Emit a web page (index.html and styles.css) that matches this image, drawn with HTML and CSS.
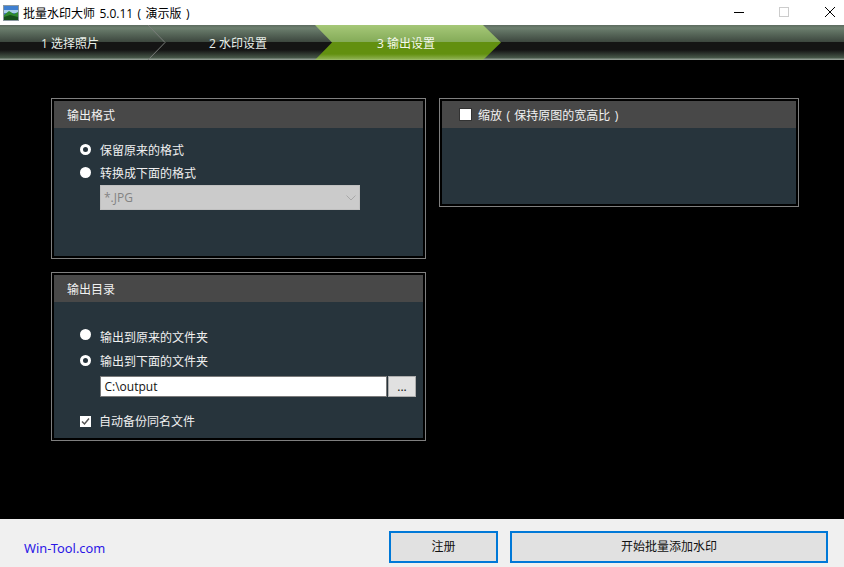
FILE: index.html
```html
<!DOCTYPE html>
<html lang="zh-CN">
<head>
<meta charset="utf-8">
<title>批量水印大师</title>
<link rel="stylesheet" href="styles.css">
</head>
<body>
<div class="app">
  <header class="titlebar">
    <svg class="app-icon" width="16" height="16" viewBox="0 0 16 16">
      <rect x="0.5" y="0.5" width="15" height="15" fill="#4a78c8" stroke="#8a98a0"/>
      <rect x="1" y="1" width="14" height="5" fill="#3f7fd0"/>
      <rect x="1" y="5" width="14" height="3" fill="#a9cfe8"/>
      <path d="M1 10 L6 6 L11 9 L15 7 V15 H1 Z" fill="#2f8a2e"/>
      <path d="M1 12 L7 10 L15 12 V15 H1 Z" fill="#16501c"/>
    </svg>
    <span class="app-title">批量水印大师 5.0.11 ( 演示版 )</span>
    <div class="win-controls">
      <svg class="win-min" width="10" height="10" viewBox="0 0 10 10"><path d="M0 5.5H10" stroke="#000"/></svg>
      <svg width="10" height="10" viewBox="0 0 10 10"><rect x="0.5" y="0.5" width="9" height="9" fill="none" stroke="#ccc"/></svg>
      <svg width="10" height="10" viewBox="0 0 10 10"><path d="M0 0L10 10M10 0L0 10" stroke="#000" stroke-width="1"/></svg>
    </div>
  </header>

  <nav class="steps">
    <div class="step step-one">1 选择照片
      <svg class="chevron" width="20" height="35" viewBox="0 0 20 35"><path d="M1 0L18 17.5L1 35" fill="none" stroke="#7a7d7a"/></svg>
    </div>
    <div class="step step-two">2 水印设置</div>
    <div class="step step-three">3 输出设置</div>
  </nav>

  <main class="content">
    <div class="col col-left">
      <section class="panel panel-format">
        <h2 class="panel-head">输出格式</h2>
        <div class="panel-body body-format">
          <label class="row"><span class="radio radio-on"></span>保留原来的格式</label>
          <label class="row"><span class="radio"></span>转换成下面的格式</label>
          <div class="combo"><span>*.JPG</span>
            <svg width="10" height="6" viewBox="0 0 10 6"><path d="M0.5 0.5L5 5L9.5 0.5" fill="none" stroke="#a8a8a8"/></svg>
          </div>
        </div>
      </section>
      <section class="panel panel-output">
        <h2 class="panel-head">输出目录</h2>
        <div class="panel-body body-output">
          <label class="row row-tall"><span class="radio radio-up-3"></span>输出到原来的文件夹</label>
          <label class="row row-tall"><span class="radio radio-on radio-up-1"></span>输出到下面的文件夹</label>
          <div class="path-row">
            <div class="path-input">C:\output</div>
            <div class="browse">...</div>
          </div>
          <label class="row check-row"><span class="check check-on">
            <svg width="11" height="11" viewBox="0 0 11 11"><path d="M2 5.5L4.5 8L9 2.5" fill="none" stroke="#555" stroke-width="1.5"/></svg>
          </span>自动备份同名文件</label>
        </div>
      </section>
    </div>
    <div class="col col-right">
      <section class="panel panel-scale">
        <h2 class="panel-head head-check"><span class="check check-big"></span><span class="scale-label">缩放 ( 保持原图的宽高比 )</span></h2>
        <div class="panel-body"></div>
      </section>
    </div>
  </main>

  <footer class="footer">
    <a class="site-link">Win-Tool.com</a>
    <button class="btn btn-reg">注册</button>
    <button class="btn btn-start">开始批量添加水印</button>
  </footer>
</div>
</body>
</html>
```
FILE: styles.css
```css
* { box-sizing: border-box; }
html, body { margin: 0; padding: 0; }
body {
  width: 844px;
  height: 567px;
  overflow: hidden;
  background: #000;
  font-family: "Open Sans", "Noto Sans CJK SC", sans-serif;
  font-size: 12px;
}
.app { display: flex; flex-direction: column; height: 567px; }

.titlebar {
  height: 25px;
  flex: none;
  background: #fff;
  display: flex;
  align-items: center;
  padding-left: 3px;
}
.app-icon { flex: none; margin-right: 4px; }
.app-title { color: #000; font-size: 12px; word-spacing: 1.3px; }
.win-controls {
  margin-left: auto;
  display: flex;
  gap: 36px;
  padding-right: 9px;
  margin-top: -1px;
}
.win-controls svg { display: block; }
.win-min { margin-right: -1px; }

.steps {
  height: 35px;
  flex: none;
  display: flex;
  background: linear-gradient(#5d6b5f 0, #6c7f6e 3px, #3c463e 17px, #141414 17px, #141414 25px, #48594a 33px, #8f9a90 34px, #8f9a90 35px);
  color: #e9efe9;
  font-size: 12px;
}
.step { height: 35px; line-height: 38px; flex: none; position: relative; }
.step-one { width: 148px; padding-left: 41px; }
.step-two { width: 167px; padding-left: 61px; }
.step-three {
  width: 186px;
  padding-left: 62px;
  color: #f4f8ec;
  background: linear-gradient(#a6c878 0, #84ab58 17px, #62900f 17px, #62900f 29px, #8cb04e 34px, #a4c47a 35px);
  clip-path: polygon(0 0, 168px 0, 186px 17.5px, 168px 35px, 0 35px, 17px 17.5px);
}
.chevron { position: absolute; left: -1px; top: 0; margin-left: 148px; }

.content {
  flex: 1;
  background: #000;
  display: flex;
  gap: 13px;
  padding: 38px 0 0 51px;
}
.col { display: flex; flex-direction: column; gap: 13px; }
.col-left { width: 375px; }
.col-right { width: 360px; }

.panel {
  border: 1px solid #7f7f7f;
  padding: 2px;
  display: flex;
  flex-direction: column;
}
.panel-format { height: 161px; }
.panel-output { height: 169px; }
.panel-scale { height: 109px; }
.panel-head {
  margin: 0;
  height: 27px;
  flex: none;
  background: #484848;
  color: #f2f2f2;
  font-size: 12px;
  font-weight: 400;
  line-height: 29px;
  padding-left: 13px;
}
.head-check { display: flex; align-items: center; padding-left: 17px; }
.scale-label { word-spacing: 1.3px; padding-top: 2px; }
.panel-body {
  flex: 1;
  background: #27343c;
  color: #f0f0f0;
  padding-left: 26px;
}
.body-format { padding-top: 10px; }
.body-output { padding-top: 23px; }

.row { display: flex; align-items: center; height: 23px; }
.row-tall { height: 24px; }
.radio {
  width: 11px;
  height: 11px;
  border-radius: 50%;
  background: #fff;
  margin-right: 9px;
  flex: none;
}
.radio-on { background: #27343c; border: 3px solid #fff; }
.radio-up-3 { margin-bottom: 6px; }
.radio-up-1 { margin-bottom: 2px; }

.combo {
  margin: 1px 0 0 20px;
  width: 260px;
  height: 25px;
  background: #cbcbcb;
  border: 1px solid #c0c0c0;
  color: #838383;
  display: flex;
  align-items: center;
  justify-content: space-between;
  padding: 0 3px;
}
.combo svg { margin-top: 1px; width: 10px; }
.combo span { line-height: 20px; }

.path-row { display: flex; margin: 3px 0 0 20px; gap: 1px; height: 21px; }
.path-input {
  width: 287px;
  background: #fff;
  border: 1px solid #7a7a7a;
  color: #111;
  line-height: 19px;
  padding-left: 3.5px;
}
.browse {
  width: 28px;
  background: #e1e1e1;
  border: 1px solid #adadad;
  color: #111;
  text-align: center;
  line-height: 19px;
}
.check-row { height: 22px; margin-top: 13px; }
.check {
  background: #fff;
  display: block;
  flex: none;
}
.check-on { width: 11px; height: 11px; margin-right: 8px; }
.check-on svg { display: block; }
.check-big { width: 13px; height: 13px; border: 1px solid #333; margin-right: 6px; }

.footer {
  height: 48px;
  flex: none;
  background: #f0f0f0;
  display: flex;
  align-items: flex-start;
  padding: 12px 16px 0 24px;
}
.site-link {
  color: #2b16e6;
  font-size: 12.85px;
  font-family: "Noto Sans", sans-serif;
  line-height: 34px;
  margin-right: auto;
}
.btn {
  height: 32px;
  border: 2px solid #0078d7;
  background: #e1e1e1;
  color: #111;
  font-family: inherit;
  font-size: 12px;
  padding: 0 0 3px;
}
.btn-reg { width: 109px; margin-right: 12px; }
.btn-start { width: 318px; }
```
